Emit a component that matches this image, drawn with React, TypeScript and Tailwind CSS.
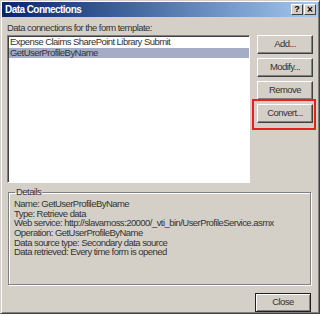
const font = "font-['Liberation_Sans',Arial,sans-serif] tracking-[-0.55px]";

function Button({ label, isDefault = false }: { label: string; isDefault?: boolean }) {
  return (
    <div
      className={
        "flex h-[19px] w-[56px] items-center justify-center bg-[#d4d0c8] text-[9.5px] text-[#333] " +
        (isDefault
          ? "border border-[#202020] shadow-[inset_1px_1px_0_#fff,inset_-1px_-1px_0_#808080]"
          : "border border-t-white border-l-white border-r-[#404040] border-b-[#404040] shadow-[inset_-1px_-1px_0_#808080]")
      }
    >
      {label}
    </div>
  );
}

export default function App() {
  const details = [
    "Name: GetUserProfileByName",
    "Type: Retrieve data",
    "Web service: http://slavamoss:20000/_vti_bin/UserProfileService.asmx",
    "Operation: GetUserProfileByName",
    "Data source type: Secondary data source",
    "Data retrieved: Every time form is opened",
  ];

  return (
    <div className={"h-[316px] w-[320px] bg-white " + font}>
      <div className="flex h-[314px] w-[320px] flex-col border border-t-[#d4d0c8] border-l-[#d4d0c8] border-r-[#404040] border-b-[#404040] bg-[#d4d0c8] shadow-[inset_1px_1px_0_#fff,inset_-1px_-1px_0_#808080] p-[1px]">
        {/* title bar */}
        <div className="flex h-[15px] items-center justify-between bg-linear-to-r from-[#0a246a] to-[#a6caf0] pl-[3px] pr-[2px]">
          <span className="text-[10px] font-bold leading-none text-white">Data Connections</span>
          <div className="flex gap-[1px] tracking-normal">
            <div className="flex h-[11px] w-[12px] items-center justify-center border border-t-white border-l-white border-r-[#404040] border-b-[#404040] bg-[#d4d0c8] text-[9px] font-bold leading-none text-black">
              ?
            </div>
            <div className="flex h-[11px] w-[12px] items-center justify-center border border-t-white border-l-white border-r-[#404040] border-b-[#404040] bg-[#d4d0c8] text-[10px] font-bold leading-none text-black">
              ×
            </div>
          </div>
        </div>

        {/* body */}
        <div className="flex flex-1 flex-col px-[5px] pt-[5px] text-[#333]">
          <div className="h-[11px] text-[9.5px] leading-[11px]">Data connections for the form template:</div>

          <div className="mt-[2px] flex gap-[7px]">
            <div className="h-[148px] flex-1 border border-t-[#808080] border-l-[#808080] border-r-white border-b-white bg-white shadow-[inset_1px_1px_0_#404040] pt-[1px] pl-[1px]">
              <div className="h-[10px] pl-[1px] text-[9.5px] leading-[10px]">Expense Claims SharePoint Library Submit</div>
              <div className="mt-[1px] h-[10px] bg-[#a5adc6] pl-[1px] text-[9.5px] leading-[10px]">GetUserProfileByName</div>
            </div>

            <div className="flex w-[56px] flex-col gap-[4px]">
              <Button label="Add..." />
              <Button label="Modify..." />
              <Button label="Remove" />
              <div className="relative">
                <Button label="Convert..." />
                <div className="absolute -top-[5px] -bottom-[7px] -left-[5px] -right-[3px] border-[2px] border-[#e8201c]" />
              </div>
            </div>
          </div>

          <fieldset className="mt-[4px] ml-[1px] mr-[2px] h-[98px] border border-[#808080] shadow-[inset_1px_1px_0_#fff,1px_1px_0_#fff] pl-[5px]">
            <legend className="ml-[1px] px-[1px] text-[9.5px] leading-[10px]">Details</legend>
            <div className="mt-[2px] flex flex-col">
              {details.map((d) => (
                <div key={d} className="h-[9.7px] whitespace-nowrap text-[9.5px] leading-[9.7px]">
                  {d}
                </div>
              ))}
            </div>
          </fieldset>

          <div className="mt-[8px] flex justify-end pr-[2px]">
            <Button label="Close" isDefault />
          </div>
        </div>
      </div>
    </div>
  );
}
